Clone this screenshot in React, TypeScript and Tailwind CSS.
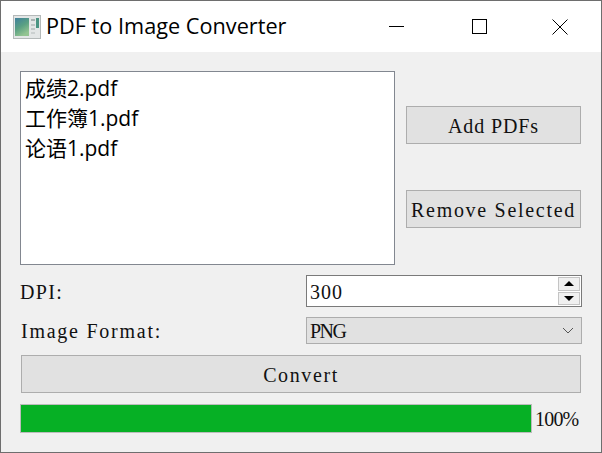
const serif = "font-['Liberation_Serif','Noto_Sans_CJK_SC',serif] text-[20px] leading-none text-[#111]";
const btn = 'flex items-center justify-center border border-[#adadad] bg-[#e1e1e1] pt-[2px] ' + serif;

function AppIcon() {
  return (
    <svg width="28" height="24" viewBox="0 0 28 24" className="shrink-0">
      <defs>
        <linearGradient id="pic" x1="0" y1="0" x2="0.5" y2="1">
          <stop offset="0" stopColor="#3f7f9c" />
          <stop offset="0.55" stopColor="#5aa083" />
          <stop offset="1" stopColor="#93c491" />
        </linearGradient>
      </defs>
      <rect x="0.5" y="0.5" width="27" height="23" fill="#e3e6e6" stroke="#b4b9b9" />
      <rect x="2" y="3" width="14" height="18" fill="url(#pic)" />
      <rect x="18" y="4" width="4" height="2" fill="#a9b2b2" />
      <rect x="18" y="9" width="4" height="2" fill="#c0c6c6" />
      <rect x="18" y="13" width="4" height="2" fill="#c0c6c6" />
      <rect x="18" y="17" width="4" height="2" fill="#cbd0d0" />
      <rect x="23" y="3" width="3" height="10" fill="#4a9482" />
    </svg>
  );
}

function TitleBar() {
  return (
    <div className="flex h-[51px] items-center bg-white">
      <div className="ml-[12px] mr-[5px] flex items-center">
        <AppIcon />
      </div>
      <span className="flex-1 font-['Open_Sans','Noto_Sans',sans-serif] text-[21.7px] text-black">PDF to Image Converter</span>
      <div className="flex h-full w-[81px] items-center justify-center">
        <div className="h-px w-[15px] bg-black" />
      </div>
      <div className="flex h-full w-[82px] items-center justify-center">
        <div className="ml-[2px] h-[15px] w-[15px] border border-black" />
      </div>
      <div className="flex h-full w-[82px] items-center justify-center">
        <svg width="16" height="16" viewBox="0 0 16 16">
          <path d="M0.5 0.5 L15.5 15.5 M15.5 0.5 L0.5 15.5" stroke="#000" strokeWidth="1" fill="none" />
        </svg>
      </div>
    </div>
  );
}

function FileList() {
  const files = ['成绩2.pdf', '工作簿1.pdf', '论语1.pdf'];
  return (
    <div className="h-[194px] w-[375px] border border-[#828790] bg-white px-[4px] pt-[1px] font-['Open_Sans','Noto_Sans_CJK_SC',sans-serif] text-[21px] text-black">
      {files.map((f) => (
        <div key={f} className="h-[30px] leading-[30px]">{f}</div>
      ))}
    </div>
  );
}

function Spinner() {
  return (
    <div className="flex h-[32px] w-[276px] items-center border border-[#7a7a7a] bg-white pl-[3px] pr-[1px]">
      <span className={'flex-1 pt-[1px] tracking-[1px] ' + serif}>300</span>
      <div className="flex h-[28px] w-[22px] flex-col gap-[1px]">
        <div className="flex flex-1 items-center justify-center border border-[#c4c4c4] bg-[#f0f0f0]">
          <div className="h-0 w-0 border-x-[5px] border-b-[5px] border-x-transparent border-b-black" />
        </div>
        <div className="flex flex-1 items-center justify-center border border-[#c4c4c4] bg-[#f0f0f0]">
          <div className="h-0 w-0 border-x-[5px] border-t-[5px] border-x-transparent border-t-black" />
        </div>
      </div>
    </div>
  );
}

function ComboBox() {
  return (
    <div className="flex h-[27px] w-[276px] items-center justify-between border border-[#adadad] bg-[#e1e1e1] pl-[3px] pr-[7px]">
      <span className={'pt-[1px] tracking-[-1.5px] ' + serif}>PNG</span>
      <svg width="12" height="7" viewBox="0 0 12 7">
        <path d="M1 1 L6 6 L11 1" stroke="#555" strokeWidth="1" fill="none" />
      </svg>
    </div>
  );
}

export default function App() {
  return (
    <div className="flex h-[453px] w-[602px] flex-col border border-[#6e6e6e] bg-[#f0f0f0]">
      <TitleBar />
      <div className="flex flex-1 flex-col pl-[19px] pt-[19px]">
        <div className="flex">
          <FileList />
          <div className="ml-[11px] flex w-[175px] flex-col gap-[46px] pt-[35px]">
            <div className={btn + ' h-[38px] tracking-[0.9px]'}>Add PDFs</div>
            <div className={btn + ' h-[38px] tracking-[1.7px]'}>Remove Selected</div>
          </div>
        </div>
        <div className="mt-[10px] flex h-[32px] items-center">
          <span className={'w-[286px] pt-[1px] tracking-[1.3px] ' + serif}>DPI:</span>
          <Spinner />
        </div>
        <div className="mt-[10px] flex h-[27px] items-center">
          <span className={'w-[286px] pl-[1px] pt-[1px] tracking-[1.75px] ' + serif}>Image Format:</span>
          <ComboBox />
        </div>
        <div className={btn + ' ml-[1px] mt-[11px] h-[38px] w-[560px] tracking-[1.6px]'}>Convert</div>
        <div className="mt-[11px] flex h-[29px] items-center">
          <div className="h-[29px] w-[512px] border border-[#bcbcbc] bg-[#e6e6e6]">
            <div className="h-full w-full bg-[#06b025]" />
          </div>
          <span className={'ml-[3px] pt-[1px] tracking-[-0.8px] ' + serif}>100%</span>
        </div>
      </div>
    </div>
  );
}
